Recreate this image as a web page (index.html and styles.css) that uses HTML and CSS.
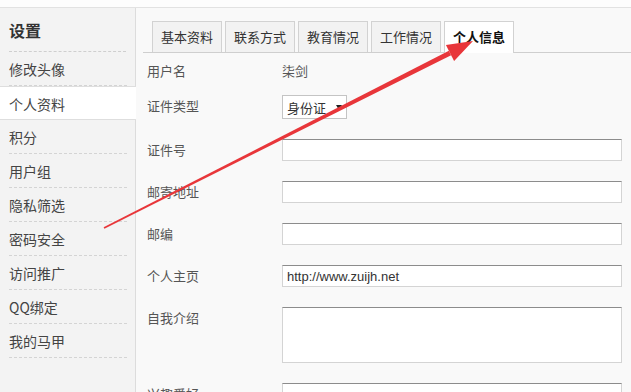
FILE: index.html
```html
<!DOCTYPE html>
<html lang="zh-CN">
<head>
    <meta charset="UTF-8">
    <title>设置 - 个人资料</title>
    <link rel="stylesheet" href="styles.css">
</head>
<body>

<div class="page">
    <div class="sidebar">
        <h2 class="side-title">设置</h2>
        <div class="side-item">修改头像</div>
        <div class="side-item active">个人资料</div>
        <div class="side-item">积分</div>
        <div class="side-item">用户组</div>
        <div class="side-item">隐私筛选</div>
        <div class="side-item">密码安全</div>
        <div class="side-item">访问推广</div>
        <div class="side-item">QQ绑定</div>
        <div class="side-item">我的马甲</div>
    </div>

    <div class="main">
        <div class="tabs">
            <div class="tab">基本资料</div>
            <div class="tab">联系方式</div>
            <div class="tab">教育情况</div>
            <div class="tab">工作情况</div>
            <div class="tab current">个人信息</div>
        </div>

        <div class="form">
            <div class="row row-first">
                <div class="label">用户名</div>
                <div class="value">柒剑</div>
            </div>
            <div class="row">
                <div class="label">证件类型</div>
                <div class="select"><span>身份证</span><span class="caret"></span></div>
            </div>
            <div class="row">
                <div class="label">证件号</div>
                <input class="input" type="text">
            </div>
            <div class="row">
                <div class="label">邮寄地址</div>
                <input class="input" type="text">
            </div>
            <div class="row">
                <div class="label">邮编</div>
                <input class="input" type="text">
            </div>
            <div class="row">
                <div class="label">个人主页</div>
                <input class="input" type="text" value="http://www.zuijh.net">
            </div>
            <div class="row">
                <div class="label">自我介绍</div>
                <textarea class="textarea"></textarea>
            </div>
            <div class="row">
                <div class="label">兴趣爱好</div>
                <input class="input" type="text">
            </div>
        </div>
    </div>
</div>

<!-- annotation arrow drawn over the screenshot -->
<svg class="arrow" width="631" height="392" viewBox="0 0 631 392">
    <polygon points="104.4,228.7 103.6,227.3 448.9,50.8 451.1,55.2" fill="#e8363a"/>
    <polygon points="473,41 445.9,45 454.1,61" fill="#e8363a"/>
</svg>

</body>
</html>
```

FILE: styles.css
```css
body {
    margin: 0;
    background-color: #fdfdfd;
    font-family: "Noto Sans CJK SC", "Noto Sans", sans-serif;
    color: #333;
    overflow: hidden;
}
.page {
    display: flex;
    margin-top: 7px;
    border-top: 1px solid #e2e2e2;
    height: 384px;
}
.sidebar {
    width: 135px;
    background-color: #f3f3f3;
    border-right: 1px solid #dcdcdc;
    flex-shrink: 0;
}
.side-title {
    margin: 0 9px;
    height: 43px;
    line-height: 44px;
    font-size: 16px;
    font-weight: bold;
    color: #333;
    border-bottom: 1px dashed #cfcfcf;
}
.side-item {
    margin: 0 8px 0 9px;
    height: 33px;
    line-height: 34px;
    font-size: 14px;
    color: #444;
    border-bottom: 1px dashed #d4d4d4;
}
.side-item.active {
    margin: 0 -1px 0 0;
    padding-left: 9px;
    height: 32px;
    background-color: #fff;
    border-top: 1px solid #dedede;
    border-bottom: 1px solid #dedede;
}
.main {
    flex: 1;
    background-color: #f9f9f9;
    padding-top: 13px;
}
.tabs {
    display: flex;
    gap: 3px;
    margin-left: 7px;
    padding-left: 9px;
    height: 31px;
    border-bottom: 1px solid #cfcfcf;
}
.tab {
    width: 68px;
    height: 30px;
    line-height: 30px;
    text-align: center;
    font-size: 13px;
    color: #333;
    background-color: #f2f2f2;
    border: 1px solid #d2d2d2;
    border-bottom: none;
}
.tab.current {
    height: 31px;
    background-color: #fff;
    color: #111;
    font-weight: bold;
}
.form {
    padding-left: 11px;
}
.row {
    display: flex;
    align-items: flex-start;
    padding: 10px 0;
}
.row-first {
    padding: 7px 0 3px;
}
.label {
    width: 135px;
    line-height: 22px;
    font-size: 13px;
    color: #555;
}
.value {
    line-height: 22px;
    font-size: 13px;
    color: #555;
}
.select {
    display: flex;
    align-items: center;
    gap: 10px;
    width: 65px;
    height: 24px;
    box-sizing: border-box;
    padding-left: 4px;
    font-size: 13px;
    color: #333;
    background-color: #fff;
    border: 1px solid #c4c4c4;
}
.caret {
    border-left: 3px solid transparent;
    border-right: 3px solid transparent;
    border-top: 5px solid #222;
}
.input {
    width: 340px;
    height: 22px;
    box-sizing: border-box;
    margin: 0;
    padding: 0 4px;
    font-family: "Liberation Sans", Arial, sans-serif;
    font-size: 13px;
    color: #333;
    background-color: #fff;
    border: 1px solid #d4d4d4;
    border-top-color: #8c8c8c;
    outline: none;
}
.textarea {
    width: 340px;
    height: 56px;
    box-sizing: border-box;
    margin: 0;
    padding: 2px 4px;
    background-color: #fff;
    border: 1px solid #d4d4d4;
    border-top-color: #8c8c8c;
    resize: none;
    outline: none;
}
.arrow {
    position: absolute;
    left: 0;
    top: 0;
    pointer-events: none;
}
```
